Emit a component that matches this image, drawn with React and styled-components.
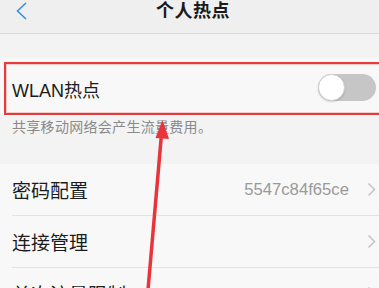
import React from "react";
import styled, { createGlobalStyle } from "styled-components";

const Global = createGlobalStyle`
  html, body { margin: 0; padding: 0; }
  body {
    width: 379px; height: 288px; overflow: hidden;
    background: #f0f0f0;
    font-family: "Noto Sans CJK SC", "Liberation Sans", sans-serif;
  }
`;

const Screen = styled.div`
  position: relative;
  width: 379px;
  height: 288px;
  overflow: hidden;
  background: #f0f0f0;
`;

const Header = styled.header`
  height: 33px;
  border-bottom: 1px solid #d8d8d8;
  background: #efefef;
  display: flex;
  align-items: flex-start;
  justify-content: center;
  position: relative;
`;

const Back = styled.div`
  position: absolute;
  left: 15px;
  top: 2px;
  line-height: 0;
`;

const Title = styled.h1`
  margin: -3px 0 0 7px;
  font-size: 18px;
  line-height: 24px;
  font-weight: 600;
  color: #1a1a1a;
  letter-spacing: 0.5px;
`;

const Gap = styled.div`
  height: ${(p) => p.h}px;
  background: #f3f3f3;
`;

const SwitchSection = styled.section`
  background: #f8f8f8;
  padding: 4px 0 2px 4px;
`;

const RedBox = styled.div`
  height: 53px;
  box-sizing: border-box;
  border: 2px solid #e63a3c;
  box-shadow: inset 0 0 0 1px rgba(240, 120, 120, 0.35);
  margin-right: -6px;
  display: flex;
  align-items: center;
  justify-content: space-between;
  padding: 0 7px 0 6px;
`;

const Label = styled.span`
  font-size: 18px;
  color: #1c1c1c;
  font-family: "Liberation Sans", "Noto Sans CJK SC", sans-serif;
`;

const Toggle = styled.div`
  width: 58px;
  height: 27px;
  border-radius: 14px;
  background: #c6c6c6;
  position: relative;
  margin-top: -2px;
`;

const Knob = styled.div`
  position: absolute;
  left: 0;
  top: 0;
  width: 27px;
  height: 27px;
  box-sizing: border-box;
  border-radius: 50%;
  background: #ffffff;
  border: 1px solid #cfcfcf;
  box-shadow: 0 1px 2px rgba(0, 0, 0, 0.15);
`;

const Caption = styled.p`
  margin: 0;
  padding: 0 0 0 12px;
  height: 47px;
  background: #f3f3f3;
  font-size: 14px;
  line-height: 18px;
  color: #8a8a8a;
  letter-spacing: 0.3px;
`;

const List = styled.div`
  background: #f8f8f8;
`;

const Row = styled.div`
  height: 51px;
  margin-left: 12px;
  padding-right: 3px;
  border-bottom: 1px solid #e2e2e2;
  display: flex;
  align-items: center;
  gap: 8px;
`;

const RowLabel = styled.span`
  flex: 1;
  font-size: 19px;
  color: #1c1c1c;
`;

const Value = styled.span`
  font-family: "Liberation Sans", sans-serif;
  font-size: 16.7px;
  color: #9a9a9a;
  margin-right: 10px;
`;

const Arrow = styled.svg`
  position: absolute;
  left: 0;
  top: 0;
  pointer-events: none;
`;

const Chevron = () => (
  <svg width="9" height="15" viewBox="0 0 9 15">
    <path d="M1.5 1.5 L7.5 7.5 L1.5 13.5" fill="none" stroke="#c4c4c8" strokeWidth="1.5" />
  </svg>
);

export default function App() {
  return (
    <Screen>
      <Global />
      <Header>
        <Back>
          <svg width="13" height="18" viewBox="0 0 13 18">
            <path d="M11 1 L2.5 9 L11 17" fill="none" stroke="#3a8ee6" strokeWidth="1.6" />
          </svg>
        </Back>
        <Title>个人热点</Title>
      </Header>
      <Gap h={24} />
      <SwitchSection>
        <RedBox>
          <Label>WLAN热点</Label>
          <Toggle>
            <Knob />
          </Toggle>
        </RedBox>
      </SwitchSection>
      <Caption>共享移动网络会产生流量费用。</Caption>
      <List>
        <Row>
          <RowLabel>密码配置</RowLabel>
          <Value>5547c84f65ce</Value>
          <Chevron />
        </Row>
        <Row>
          <RowLabel>连接管理</RowLabel>
          <Chevron />
        </Row>
        <Row>
          <RowLabel>单次流量限制</RowLabel>
          <Chevron />
        </Row>
      </List>
      <Arrow width="379" height="288" viewBox="0 0 379 288">
        <line x1="148" y1="290" x2="161.5" y2="134" stroke="#e8343a" strokeWidth="3.5" />
        <polygon points="162.5,120 169,139 155.5,138" fill="#e8343a" />
      </Arrow>
    </Screen>
  );
}
